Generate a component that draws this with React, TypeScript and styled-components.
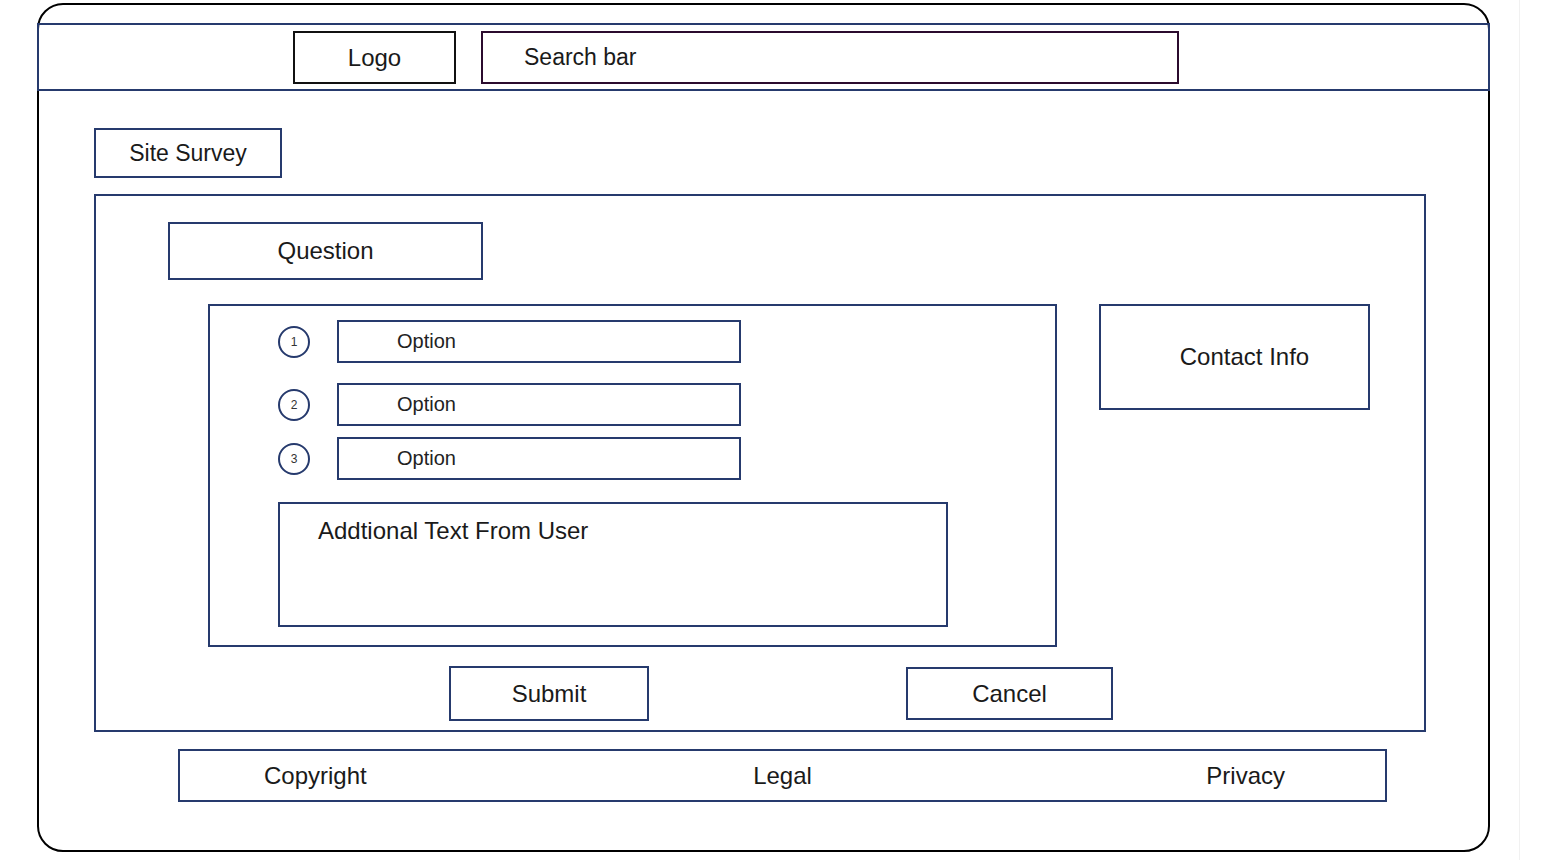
import React from 'react';
import styled, { createGlobalStyle } from 'styled-components';

const GlobalStyle = createGlobalStyle`
  html, body {
    margin: 0;
    padding: 0;
    background: #ffffff;
  }
  body {
    font-family: "Liberation Sans", Arial, sans-serif;
    color: #1a1a1a;
  }
`;

const blue = '#263a6d';

const Page = styled.div`
  width: 1520px;
  height: 860px;
  border-right: 1px solid #f1f1f1;
  padding: 3px 0 0 37px;
  box-sizing: border-box;
`;

const Frame = styled.div`
  width: 1453px;
  height: 849px;
  box-sizing: border-box;
  border: 2px solid #000;
  border-radius: 26px;
  padding-top: 18px;
  display: flex;
  flex-direction: column;
`;

const Header = styled.header`
  margin: 0 -2px;
  height: 68px;
  box-sizing: border-box;
  border: 2px solid ${blue};
  display: flex;
  align-items: flex-start;
  padding: 6px 0 0 254px;
  gap: 25px;
`;

const Box = styled.div<{ $w: number; $h: number; $color?: string; $size?: number }>`
  width: ${(p) => p.$w}px;
  height: ${(p) => p.$h}px;
  box-sizing: border-box;
  border: 2px solid ${(p) => p.$color || blue};
  display: flex;
  align-items: center;
  justify-content: center;
  font-size: ${(p) => p.$size || 24}px;
  flex-shrink: 0;
`;

const SearchBox = styled(Box)`
  justify-content: flex-start;
  padding-left: 41px;
`;

const ContactBox = styled(Box)`
  padding-left: 20px;
`;

const Body = styled.div`
  padding: 37px 0 0 55px;
  display: flex;
  flex-direction: column;
`;

const Panel = styled.section`
  margin-top: 16px;
  width: 1332px;
  height: 538px;
  box-sizing: border-box;
  border: 2px solid ${blue};
  padding: 26px 0 0 72px;
  display: flex;
  flex-direction: column;
`;

const Middle = styled.div`
  margin-top: 24px;
  margin-left: 40px;
  display: flex;
  align-items: flex-start;
  gap: 42px;
`;

const OptionsPanel = styled.div`
  width: 849px;
  height: 343px;
  box-sizing: border-box;
  border: 2px solid ${blue};
  padding: 14px 0 0 68px;
  display: flex;
  flex-direction: column;
`;

const OptionRow = styled.div<{ $gap: number }>`
  margin-top: ${(p) => p.$gap}px;
  display: flex;
  align-items: center;
  gap: 27px;
`;

const Circle = styled.div`
  width: 32px;
  height: 32px;
  box-sizing: border-box;
  border: 2px solid ${blue};
  border-radius: 50%;
  display: flex;
  align-items: center;
  justify-content: center;
  font-size: 12px;
  color: #333;
`;

const OptionBox = styled.div`
  width: 404px;
  height: 43px;
  box-sizing: border-box;
  border: 2px solid ${blue};
  display: flex;
  align-items: center;
  padding-left: 58px;
  font-size: 20px;
  color: #222;
`;

const TextArea = styled.div`
  margin-top: 22px;
  width: 670px;
  height: 125px;
  box-sizing: border-box;
  border: 2px solid ${blue};
  padding: 13px 0 0 38px;
  font-size: 24px;
`;

const Buttons = styled.div`
  margin-top: 19px;
  margin-left: 281px;
  display: flex;
  align-items: flex-start;
  gap: 257px;
`;

const Footer = styled.footer`
  margin: 17px 0 0 84px;
  width: 1209px;
  height: 53px;
  box-sizing: border-box;
  border: 2px solid ${blue};
  display: grid;
  grid-template-columns: 1fr 1fr 1fr;
  align-items: center;
  font-size: 24px;
`;

const FooterItem = styled.span<{ $align: 'left' | 'center' | 'right'; $pad?: number }>`
  text-align: ${(p) => p.$align};
  padding-left: ${(p) => (p.$align === 'left' ? p.$pad || 0 : 0)}px;
  padding-right: ${(p) => (p.$align === 'right' ? p.$pad || 0 : 0)}px;
`;

const options = [
  { n: 1, gap: 0 },
  { n: 2, gap: 20 },
  { n: 3, gap: 11 },
];

export default function App() {
  return (
    <>
      <GlobalStyle />
      <Page>
        <Frame>
          <Header>
            <Box $w={163} $h={53} $color="#111">Logo</Box>
            <SearchBox $w={698} $h={53} $color="#2b0b2e" $size={23}>Search bar</SearchBox>
          </Header>
          <Body>
            <Box $w={188} $h={50} $size={23}>Site Survey</Box>
            <Panel>
              <Box $w={315} $h={58}>Question</Box>
              <Middle>
                <OptionsPanel>
                  {options.map((o) => (
                    <OptionRow key={o.n} $gap={o.gap}>
                      <Circle>{o.n}</Circle>
                      <OptionBox>Option</OptionBox>
                    </OptionRow>
                  ))}
                  <TextArea>Addtional Text From User</TextArea>
                </OptionsPanel>
                <ContactBox $w={271} $h={106}>Contact Info</ContactBox>
              </Middle>
              <Buttons>
                <Box $w={200} $h={55}>Submit</Box>
                <Box $w={207} $h={53} style={{ marginTop: 1 }}>Cancel</Box>
              </Buttons>
            </Panel>
            <Footer>
              <FooterItem $align="left" $pad={84}>Copyright</FooterItem>
              <FooterItem $align="center">Legal</FooterItem>
              <FooterItem $align="right" $pad={100}>Privacy</FooterItem>
            </Footer>
          </Body>
        </Frame>
      </Page>
    </>
  );
}
